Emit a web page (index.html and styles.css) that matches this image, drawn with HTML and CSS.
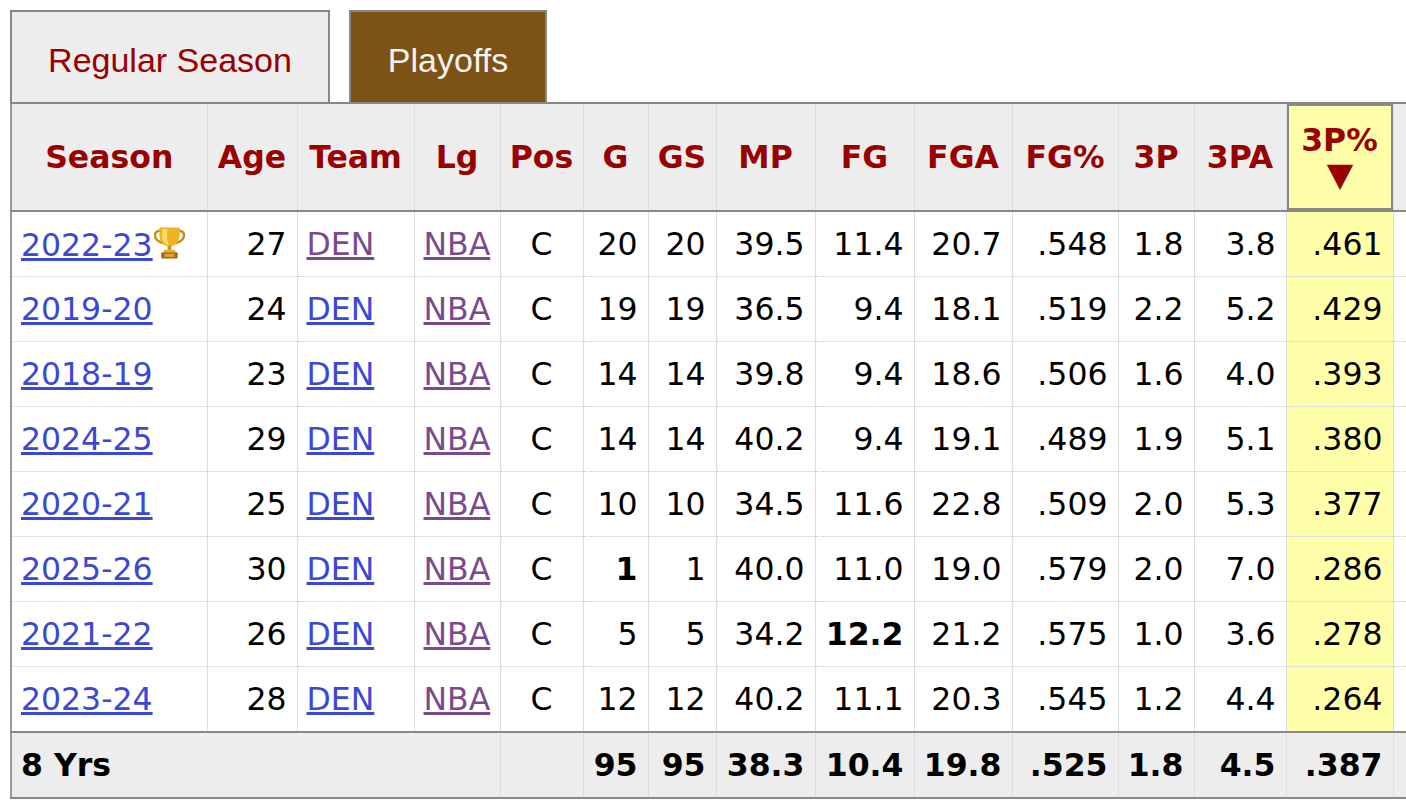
FILE: index.html
```html
<!DOCTYPE html>
<html>
<head>
<meta charset="utf-8">
<link rel="stylesheet" href="styles.css">
</head>
<body>
<div class="page">
  <div class="tabs">
    <div class="tab tab-regular">Regular Season</div>
    <div class="tab tab-playoffs">Playoffs</div>
  </div>
  <table class="stats">
    <colgroup>
      <col class="c-season"><col class="c-age"><col class="c-team"><col class="c-lg"><col class="c-pos">
      <col class="c-g"><col class="c-gs"><col class="c-mp"><col class="c-fg"><col class="c-fga">
      <col class="c-fgp"><col class="c-3p"><col class="c-3pa"><col class="c-3pp"><col class="c-next">
    </colgroup>
    <thead>
      <tr>
        <th>Season</th><th>Age</th><th>Team</th><th>Lg</th><th>Pos</th><th>G</th><th>GS</th><th>MP</th><th>FG</th><th>FGA</th><th>FG%</th><th>3P</th><th>3PA</th>
        <th class="sorted"><span class="sort-label">3P%</span><span class="arrow">▼</span></th><th></th>
      </tr>
    </thead>
    <tbody>
      <tr>
        <td class="l"><a class="link" href="#">2022-23</a><svg class="trophy" viewBox="0 0 32 34" width="31" height="33"><path d="M8 5 C2 4 0 8 1.5 12 C3 16 7 17 11 18" fill="none" stroke="#c98d17" stroke-width="2.6"/><path d="M24 5 C30 4 32 8 30.5 12 C29 16 25 17 21 18" fill="none" stroke="#c98d17" stroke-width="2.6"/><path d="M5.5 1.5 H26.5 V9 C26.5 16.5 22 21 16 21 C10 21 5.5 16.5 5.5 9 Z" fill="#f0b323"/><path d="M8.5 3 H13.5 V10 C13.5 15 14.5 17.5 15.5 20 C11 19 8.5 15.5 8.5 10 Z" fill="#fcdc6e"/><rect x="14" y="20" width="4" height="5" fill="#d5951a"/><path d="M10.5 24.5 H21.5 L22.5 27 H9.5 Z" fill="#eaae26"/><rect x="7.5" y="27" width="17" height="6.5" rx="1" fill="#a86a17"/><rect x="11" y="28.8" width="10" height="3" fill="#e3a623"/></svg></td>
        <td>27</td><td class="l"><a class="visited" href="#">DEN</a></td><td class="l"><a class="visited" href="#">NBA</a></td><td class="c">C</td>
        <td>20</td><td>20</td><td>39.5</td><td>11.4</td><td>20.7</td><td>.548</td><td>1.8</td><td>3.8</td><td class="hl">.461</td><td></td>
      </tr>
      <tr>
        <td class="l"><a class="link" href="#">2019-20</a></td>
        <td>24</td><td class="l"><a class="link" href="#">DEN</a></td><td class="l"><a class="visited" href="#">NBA</a></td><td class="c">C</td>
        <td>19</td><td>19</td><td>36.5</td><td>9.4</td><td>18.1</td><td>.519</td><td>2.2</td><td>5.2</td><td class="hl">.429</td><td></td>
      </tr>
      <tr>
        <td class="l"><a class="link" href="#">2018-19</a></td>
        <td>23</td><td class="l"><a class="link" href="#">DEN</a></td><td class="l"><a class="visited" href="#">NBA</a></td><td class="c">C</td>
        <td>14</td><td>14</td><td>39.8</td><td>9.4</td><td>18.6</td><td>.506</td><td>1.6</td><td>4.0</td><td class="hl">.393</td><td></td>
      </tr>
      <tr>
        <td class="l"><a class="link" href="#">2024-25</a></td>
        <td>29</td><td class="l"><a class="link" href="#">DEN</a></td><td class="l"><a class="visited" href="#">NBA</a></td><td class="c">C</td>
        <td>14</td><td>14</td><td>40.2</td><td>9.4</td><td>19.1</td><td>.489</td><td>1.9</td><td>5.1</td><td class="hl">.380</td><td></td>
      </tr>
      <tr>
        <td class="l"><a class="link" href="#">2020-21</a></td>
        <td>25</td><td class="l"><a class="link" href="#">DEN</a></td><td class="l"><a class="visited" href="#">NBA</a></td><td class="c">C</td>
        <td>10</td><td>10</td><td>34.5</td><td>11.6</td><td>22.8</td><td>.509</td><td>2.0</td><td>5.3</td><td class="hl">.377</td><td></td>
      </tr>
      <tr>
        <td class="l"><a class="link" href="#">2025-26</a></td>
        <td>30</td><td class="l"><a class="link" href="#">DEN</a></td><td class="l"><a class="visited" href="#">NBA</a></td><td class="c">C</td>
        <td class="b">1</td><td>1</td><td>40.0</td><td>11.0</td><td>19.0</td><td>.579</td><td>2.0</td><td>7.0</td><td class="hl">.286</td><td></td>
      </tr>
      <tr>
        <td class="l"><a class="link" href="#">2021-22</a></td>
        <td>26</td><td class="l"><a class="link" href="#">DEN</a></td><td class="l"><a class="visited" href="#">NBA</a></td><td class="c">C</td>
        <td>5</td><td>5</td><td>34.2</td><td class="b">12.2</td><td>21.2</td><td>.575</td><td>1.0</td><td>3.6</td><td class="hl">.278</td><td></td>
      </tr>
      <tr>
        <td class="l"><a class="link" href="#">2023-24</a></td>
        <td>28</td><td class="l"><a class="link" href="#">DEN</a></td><td class="l"><a class="visited" href="#">NBA</a></td><td class="c">C</td>
        <td>12</td><td>12</td><td>40.2</td><td>11.1</td><td>20.3</td><td>.545</td><td>1.2</td><td>4.4</td><td class="hl">.264</td><td></td>
      </tr>
    </tbody>
    <tfoot>
      <tr>
        <td class="l" colspan="4">8 Yrs</td><td></td>
        <td>95</td><td>95</td><td>38.3</td><td>10.4</td><td>19.8</td><td>.525</td><td>1.8</td><td>4.5</td><td>.387</td><td></td>
      </tr>
    </tfoot>
  </table>
</div>
</body>
</html>
```

FILE: styles.css
```css
html, body {
  margin: 0;
  padding: 0;
  background: #fff;
  overflow: hidden;
}

.page {
  padding: 10px 0 0 10px;
  width: 1600px;
}

.tabs {
  display: flex;
  gap: 19px;
  align-items: flex-end;
}

.tab {
  box-sizing: border-box;
  height: 92px;
  border: 2px solid #888;
  border-bottom: none;
  display: flex;
  align-items: center;
  justify-content: center;
  padding-top: 6px;
  font-family: "Liberation Sans", Arial, sans-serif;
  font-size: 34px;
}

.tab-regular {
  width: 320px;
  background: #ededed;
  color: #900;
}

.tab-playoffs {
  width: 198px;
  background: #7c5215;
  color: #f2f2f2;
}

.stats {
  border-collapse: collapse;
  table-layout: fixed;
  width: 1600px;
  font-family: "DejaVu Sans", Verdana, sans-serif;
  font-size: 31.5px;
  color: #000;
  border-left: 2px solid #999;
  border-top: 2px solid #888;
}

.c-season { width: 196px; }
.c-age { width: 90px; }
.c-team { width: 117px; }
.c-lg { width: 86px; }
.c-pos { width: 83px; }
.c-g { width: 65px; }
.c-gs { width: 68px; }
.c-mp { width: 99px; }
.c-fg { width: 99px; }
.c-fga { width: 98px; }
.c-fgp { width: 106px; }
.c-3p { width: 76px; }
.c-3pa { width: 92px; }
.c-3pp { width: 107px; }
.c-next { width: 219px; }

.stats th {
  background: #ededed;
  color: #900;
  font-weight: bold;
  height: 106px;
  padding: 0;
  text-align: center;
  white-space: nowrap;
  border-right: 1px solid #ddd;
  border-bottom: 2px solid #888;
  line-height: 36px;
}

.stats th.sorted {
  background: #ffffaa;
  box-shadow: inset 0 0 0 2px #888;
}

.sort-label {
  display: block;
  line-height: 36px;
}

.arrow {
  display: block;
  font-size: 30px;
  line-height: 34px;
  transform: scale(1.15, 1.1);
}

.stats td {
  height: 64px;
  padding: 0 10px 0 9px;
  text-align: right;
  white-space: nowrap;
  border-right: 1px solid #ddd;
  border-bottom: 1px dotted #ccc;
}

.stats td.l { text-align: left; }
.stats td.c { text-align: center; padding: 0; }
.stats td.b { font-weight: bold; }
.stats td.hl { background: #ffffaa; }

.stats tbody tr:last-child td {
  border-bottom: none;
}

.stats tfoot td {
  background: #ededed;
  font-weight: bold;
  height: 64px;
  border-top: 2px solid #888;
  border-bottom: 2px solid #888;
}

.link {
  color: #3a48d6;
  text-decoration: underline;
}

.visited {
  color: #7a4a8c;
  text-decoration: underline;
}

.trophy {
  vertical-align: -3px;
  margin-left: 1px;
}
```
